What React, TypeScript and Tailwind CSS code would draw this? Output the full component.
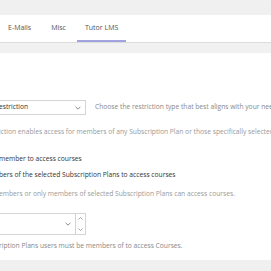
import React from "react";

const Chevron: React.FC<{ className?: string; up?: boolean }> = ({ className, up }) => (
  <svg viewBox="0 0 10 6" className={className} fill="none" stroke="currentColor" strokeWidth="1.3">
    {up ? <path d="M1 5 L5 1 L9 5" /> : <path d="M1 1 L5 5 L9 1" />}
  </svg>
);

export default function App() {
  return (
    <div className="w-[271px] h-[271px] overflow-hidden bg-white flex flex-col font-['Open_Sans',sans-serif] text-[6.7px] text-[#3c3c3c]">
      <div className="h-[15px] bg-[#f0f0f0] shrink-0" />

      {/* tabs */}
      <div className="h-[28px] shrink-0 bg-white border-b border-[#dcdcdc] flex items-end">
        <div className="flex text-[7px] text-[#555] whitespace-nowrap">
          <div className="pl-[8px] pr-[10px] pb-[9px]">E-Mails</div>
          <div className="px-[10px] pb-[9px]">Misc</div>
          <div className="ml-[1px] px-[8px] pb-[7px] border-b-[2px] border-[#a0a3e0]">Tutor LMS</div>
        </div>
      </div>
      <div className="h-[10px] bg-[#f1f1f1] shrink-0" />

      {/* content */}
      <div className="flex-1 flex flex-col">
        <div className="mt-[47px] flex items-center">
          <div className="w-[87px] h-[15px] shrink-0 -ml-px border border-[#d4d4d4] flex items-center justify-between pr-[4px]">
            <span className="-ml-[1px] text-[#333]">estriction</span>
            <Chevron className="w-[6px] h-[4px] text-[#666]" />
          </div>
          <div className="ml-[9px] whitespace-nowrap text-[#888]">Choose the restriction type that best aligns with your needs</div>
        </div>

        <div className="mt-[12px] -ml-[1px] whitespace-nowrap text-[#999]">
          iction enables access for members of any Subscription Plan or those specifically selected
        </div>

        <div className="mt-[17px] -ml-[1px] whitespace-nowrap text-[#333]">member to access courses</div>
        <div className="mt-[6px] -ml-[1px] whitespace-nowrap text-[#333]">bers of the selected Subscription Plans to access courses</div>
        <div className="mt-[9px] -ml-[1px] whitespace-nowrap text-[#999]">
          embers or only members of selected Subscription Plans can access courses.
        </div>

        <div className="mt-[14px] flex">
          <div className="w-[87px] h-[22px] shrink-0 -ml-px border border-[#d4d4d4] flex">
            <div className="flex-1 flex items-center justify-end pr-[4px] border-r border-[#d4d4d4]">
              <Chevron className="w-[6px] h-[4px] text-[#666]" />
            </div>
            <div className="w-[9px] flex flex-col items-center justify-between py-[3px]">
              <Chevron up className="w-[5px] h-[3px] text-[#777]" />
              <Chevron className="w-[5px] h-[3px] text-[#777]" />
            </div>
          </div>
        </div>
        <div className="mt-[6px] -ml-[1px] whitespace-nowrap text-[#888]">
          ription Plans users must be members of to access Courses.
        </div>
      </div>

      <div className="h-[11px] bg-[#f0f0f0] shrink-0" />
    </div>
  );
}
